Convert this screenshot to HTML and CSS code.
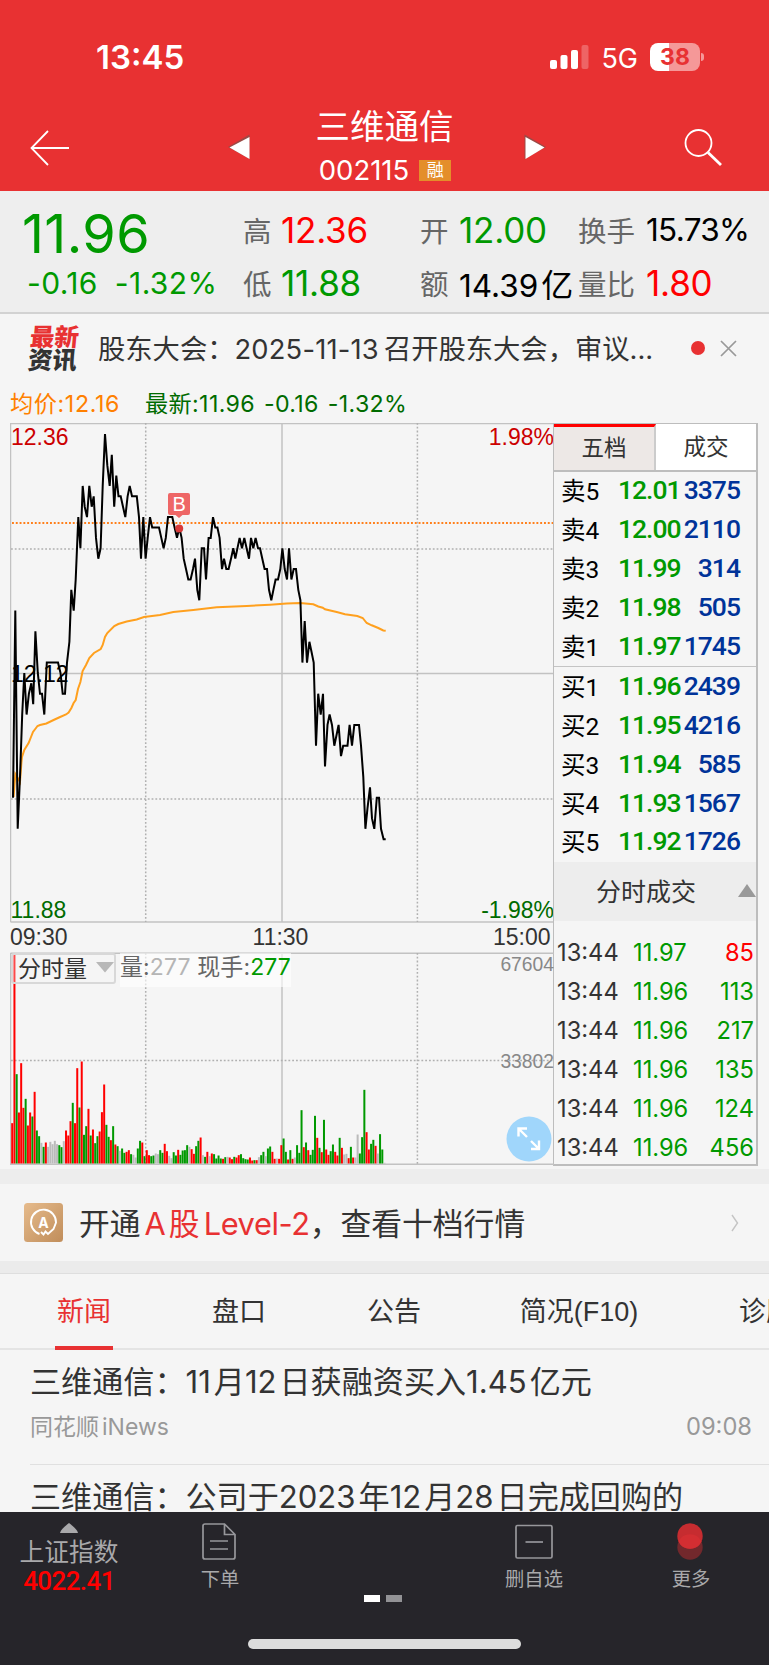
FILE: index.html
```html
<!DOCTYPE html>
<html lang="zh-CN">

<head>
    <meta charset="UTF-8">
    <meta name="viewport" content="width=device-width, initial-scale=1.0">
    <title>三维通信 002115</title>
    <link rel="stylesheet" href="styles.css">
</head>

<body>
    <header class="header">
        <div class="status">
            <span class="clock">13:45</span>
            <svg class="signal" width="39" height="26" viewBox="0 0 39 26" fill="#fff">
                <rect x="0" y="16" width="7" height="9" rx="2" />
                <rect x="10.5" y="11" width="7" height="14" rx="2" />
                <rect x="21" y="6" width="7" height="19" rx="2" />
                <rect x="31.5" y="1" width="7" height="24" rx="2" opacity="0.25" />
            </svg>
            <span class="network">5G</span>
            <span class="battery">38</span>
            <span class="battery-tip"></span>
        </div>
        <div class="navbar">
            <svg class="back" width="40" height="36" viewBox="0 0 40 36" fill="none" stroke="#fff" stroke-width="1.8">
                <path d="M18 1 L1.5 18 L18 35 M1.5 18 H39" />
            </svg>
            <svg class="prev" width="22" height="26" viewBox="0 0 22 26">
                <path d="M0 13 L21.5 0.5 V25 Z" fill="#9b4a46" />
                <path d="M1.5 13.5 L21.5 3 V25 Z" fill="#fff" />
            </svg>
            <div class="stock">
                <div class="stock-name">三维通信</div>
                <div class="stock-code">002115<span class="tag">融</span></div>
            </div>
            <svg class="next" width="22" height="26" viewBox="0 0 22 26">
                <path d="M22 13 L0.5 0.5 V25 Z" fill="#9b4a46" />
                <path d="M20.5 13.5 L1.5 3 V25 Z" fill="#fff" />
            </svg>
            <svg class="search" width="40" height="38" viewBox="0 0 40 38" fill="none" stroke="#fff">
                <circle cx="14.5" cy="14" r="13" stroke-width="1.8" />
                <path d="M24 23.5 L37 36" stroke-width="2.8" />
            </svg>
        </div>
    </header>

    <section class="quote">
        <div class="price-box">
            <div class="price">11.96</div>
            <div class="change"><span>-0.16</span><span>-1.32%</span></div>
        </div>
        <div class="quote-grid">
            <span class="label">高</span><span class="value red">12.36</span>
            <span class="label">开</span><span class="value green">12.00</span>
            <span class="label">换手</span><span class="value small">15.73%</span>
            <span class="label">低</span><span class="value green">11.88</span>
            <span class="label">额</span><span class="value small amount">14.39<span class="unit">亿</span></span>
            <span class="label">量比</span><span class="value red">1.80</span>
        </div>
    </section>

    <section class="notice">
        <div class="notice-logo"><span>最新</span><span>资讯</span></div>
        <p class="notice-text">股东大会：<span class="date">2025-11-13</span>召开股东大会，审议...</p>
        <span class="dot"></span>
        <svg class="close" width="17" height="17" viewBox="0 0 17 17" stroke="#999" stroke-width="1.7">
            <path d="M1 1 L16 16 M16 1 L1 16" />
        </svg>
    </section>

    <div class="summary"><span class="avg">均价:12.16</span><span class="last">最新:11.96 <i>-0.16</i> <i>-1.32%</i></span></div>

    <main class="board">
        <div class="charts">
            <svg class="price-chart" width="544" height="529" viewBox="10 423 544 529">
                <g class="grid">
                    <path d="M10.5 423.5 H554 M10.5 673.5 H554 M10.5 922 H554 M10.5 423 V922 M282 423 V922" />
                    <path class="dotted" d="M11 549 H553 M11 799 H553 M145.7 423 V922 M417.4 423 V922" />
                </g>
                <path class="dotted last-line" d="M12 523 H553" />
                <polyline class="avg-line" points="13.6,797 15.4,774 17.8,778 20,782 21.4,763 22,757 24.3,750 28.6,743 31,737 33,732 36,728 37.5,726 40,725 46.4,723.5 53.6,720 59,717.5 66,714.5 68.6,712.6 71.4,708 73.6,703 75.7,700 78,689 80.4,682 82.6,671 86,665 89.3,658 94,653 100.7,649 102.7,645 105,637 107.3,633 114.3,626 118.3,624 126.7,621.5 136.7,619.5 144,617 160,615 173.3,612 193.3,610 216.7,607.3 246.7,606 270,604.7 286.7,603.5 300,603 313.3,604.3 318.3,606.5 322.7,607.7 325,609.3 336.7,612 345,614.3 357.3,616 362.7,618 366.7,623 371.7,625.3 378.3,628 383.3,630.5 385.7,630.7" />
                <!-- y is counted in ticks of 0.01 down from 12.36 -->
                <g transform="translate(0 423.6) scale(1 10.39)">
                    <polyline class="price-line" points="13,36 15.3,18 17.7,39 20,34 22.2,28 24.3,24 26.6,28 28.9,26 31.3,25 33.2,27 35.4,20 37.8,24 40,26 42,26 44.3,28 46.8,23 58,23 60.5,24 62.7,26 65,26 67,23 69.4,21 71.3,16 73.7,18 75.7,15 78.3,9 80.4,12 82.7,6 84.7,8 87,9 89.3,6 91.7,8 93.7,7 96,11 98.3,13 100.6,12 102.7,6 105,1 107.3,4 109.7,6 111.8,3 114.2,8 116.3,5 118.5,7 120.7,7 123,8 125.3,9 127.6,7 129.7,6 132,7 136.8,7 139,9 141,13 143.3,9 145.6,13 147.7,11 150,9 152.2,10 159,10 161.3,11 163.6,12 165.8,11 168,9 172.3,9 174.6,10 177,11 179.3,10 181.6,11 183.7,13 186,14 188.3,15 190.6,15 193,14 195,13 197.3,16 199.3,17 201.7,12 204,12 206,15 208.6,11 210.7,11 213,9 215.3,10 217.4,10 219.6,11 222,14 224,13 226.3,14 228.6,14 231,13 233.3,12 235.3,13 239.6,11 242,12 244.3,11 246.6,12 249,13 251,11 253.3,12 255.6,11 258,12 260,12 262.3,13 264.6,14 267,14 269,16 271.3,17 273.4,16 275.6,15 278,15 280.3,14 282.4,12 284.7,14 287,15 289,12 291.4,15 293.7,14 296,14 298.3,16 300.4,17 302.4,23 304.7,19 307,23 309.4,21 311.6,22 313.7,23 316,31 318.2,26 320.7,28 323,26 325,33 327.5,29 329.6,28 332,29 334.3,31 336.5,30 338.6,29 341,32 343.2,31 347.5,31 349.6,29 352,31 354.3,29 359,29 361,31 363.3,34 365.4,39 367.5,37 370,35 372,38 374.3,39 376.8,36 379,36 381,39 383.6,40 385.7,40" />
                </g>
                <g class="buy">
                    <circle cx="179.2" cy="528.5" r="4" />
                    <path d="M170 493 h18 q2 0 2 2 v18 q0 2 -2 2 h-5.5 l-3.5 3 l-3.5 -3 h-5.5 q-2 0 -2 -2 v-18 q0 -2 2 -2 Z" />
                    <text x="179.2" y="511" text-anchor="middle">B</text>
                </g>
                <text x="11" y="445" class="up">12.36</text>
                <text x="554" y="445" class="up" text-anchor="end">1.98%</text>
                <text x="11" y="682" class="mid">12.12</text>
                <text x="10.5" y="918" class="down">11.88</text>
                <text x="554" y="918" class="down" text-anchor="end">-1.98%</text>
                <text x="10" y="945">09:30</text>
                <text x="280.5" y="945" text-anchor="middle">11:30</text>
                <text x="550.5" y="945" text-anchor="end">15:00</text>
            </svg>
            <div class="volume">
                <svg class="volume-chart" width="544" height="215" viewBox="10 952 544 215">
                    <g class="grid">
                        <path d="M10.5 953.3 H554 M10.5 1164.3 H554 M10.5 953 V1165 M282 953 V1165" />
                        <path class="dotted" d="M11 1060.5 H553 M145.7 953 V1165 M417.4 953 V1165" />
                    </g>
                    <text x="554" y="971" class="vol-label" text-anchor="end">67604</text>
                    <text x="554" y="1067.5" class="vol-label" text-anchor="end">33802</text>
                    <g id="volumeBars"></g>
                </svg>
                <div class="volume-bar">
                    <div class="select">分时量<svg width="18" height="11" viewBox="0 0 18 11"><path d="M0 0 H18 L9 10.5 Z" fill="#b8b8b8" /></svg></div>
                    <div class="volume-info">量:<span class="gray">277</span> 现手:<span class="green">277</span></div>
                </div>
                <svg class="expand" width="46" height="46" viewBox="0 0 46 46">
                    <circle cx="23" cy="23" r="22.5" fill="#a0d6fb" />
                    <path d="M12.5 20.5 V12.5 H21 M12.5 12.5 L21 21 M25 25 L33 33 M25 33 H33 V24.5" fill="none" stroke="#fff" stroke-width="2.4" />
                </svg>
            </div>
        </div>

        <aside class="book">
            <div class="book-tabs">
                <span class="book-tab active">五档</span>
                <span class="book-tab">成交</span>
            </div>
            <div class="levels">
                <div class="level"><span>卖5</span><b>12.01</b><em>3375</em></div>
                <div class="level"><span>卖4</span><b>12.00</b><em>2110</em></div>
                <div class="level"><span>卖3</span><b>11.99</b><em>314</em></div>
                <div class="level"><span>卖2</span><b>11.98</b><em>505</em></div>
                <div class="level"><span>卖1</span><b>11.97</b><em>1745</em></div>
            </div>
            <div class="levels buys">
                <div class="level"><span>买1</span><b>11.96</b><em>2439</em></div>
                <div class="level"><span>买2</span><b>11.95</b><em>4216</em></div>
                <div class="level"><span>买3</span><b>11.94</b><em>585</em></div>
                <div class="level"><span>买4</span><b>11.93</b><em>1567</em></div>
                <div class="level"><span>买5</span><b>11.92</b><em>1726</em></div>
            </div>
            <div class="ticks-title">分时成交<svg width="18" height="13" viewBox="0 0 18 13"><path d="M0 13 L9 0 L18 13 Z" fill="#999" /></svg></div>
            <div class="ticks">
                <div class="tick"><span>13:44</span><span class="green">11.97</span><span class="red">85</span></div>
                <div class="tick"><span>13:44</span><span class="green">11.96</span><span class="green">113</span></div>
                <div class="tick"><span>13:44</span><span class="green">11.96</span><span class="green">217</span></div>
                <div class="tick"><span>13:44</span><span class="green">11.96</span><span class="green">135</span></div>
                <div class="tick"><span>13:44</span><span class="green">11.96</span><span class="green">124</span></div>
                <div class="tick"><span>13:44</span><span class="green">11.96</span><span class="green">456</span></div>
            </div>
        </aside>
    </main>

    <section class="promo">
        <svg class="promo-icon" width="39" height="39" viewBox="0 0 39 39">
            <defs>
                <linearGradient id="gold" x1="0" y1="0" x2="1" y2="1">
                    <stop offset="0" stop-color="#e6bb8c" />
                    <stop offset="1" stop-color="#c08d5a" />
                </linearGradient>
            </defs>
            <rect width="39" height="39" rx="3.5" fill="url(#gold)" />
            <path d="M15.5 31 A12.5 12.5 0 1 1 32 19.5 L29.5 26 L24 31 L21.5 28.5 L19.5 31.5 L17 29" fill="none" stroke="#fff" stroke-width="1.9" />
            <text x="19.5" y="24.5" text-anchor="middle">A</text>
        </svg>
        <p class="promo-text">开通<span class="hl"><span class="a">A</span>股<span class="lv">Level-2</span></span>，查看十档行情</p>
        <svg class="chevron" width="8" height="18" viewBox="0 0 8 18" fill="none" stroke="#c4c4c4" stroke-width="1.4">
            <path d="M1 1 L6.5 9 L1 17" />
        </svg>
    </section>

    <nav class="tabs">
        <span class="tab active">新闻</span>
        <span class="tab">盘口</span>
        <span class="tab">公告</span>
        <span class="tab f10">简况(F10)</span>
        <span class="tab">诊股</span>
    </nav>

    <section class="news">
        <article class="item">
            <h3>三维通信：<span>11</span>月<span>12</span>日获融资买入<span>1.45</span>亿元</h3>
            <div class="meta"><span>同花顺<span class="src">iNews</span></span><time>09:08</time></div>
        </article>
        <article class="item">
            <h3>三维通信：公司于<span>2023</span>年<span>12</span>月<span>28</span>日完成回购的</h3>
        </article>
    </section>

    <footer class="bottom">
        <div class="actions">
            <div class="index">
                <svg width="18" height="10" viewBox="0 0 18 10"><path d="M9 0 Q18 7 18 10 H0 Q0 7 9 0 Z" fill="#a9a9ab" /></svg>
                <div class="index-name">上证指数</div>
                <div class="index-value">4022.41</div>
            </div>
            <div class="action order">
                <svg width="34" height="37" viewBox="0 0 34 37" fill="none" stroke="#97979b" stroke-width="1.7">
                    <path d="M1 3 Q1 1 3 1 H22.5 L33 11.5 V34 Q33 36 31 36 H3 Q1 36 1 34 Z M22.5 1 V11.5 H33 M8 18 H26 M8 26 H26" />
                </svg>
                <span>下单</span>
            </div>
            <div class="action remove">
                <svg width="38" height="37" viewBox="0 0 38 37" fill="none" stroke="#97979b" stroke-width="1.7">
                    <rect x="1" y="2.5" width="36" height="32.5" rx="1.5" />
                    <path d="M10.5 19 H28" />
                </svg>
                <span>删自选</span>
            </div>
            <div class="action more">
                <svg width="26" height="37" viewBox="0 0 26 37">
                    <circle cx="13" cy="24" r="12.7" fill="#72282c" />
                    <circle cx="13" cy="13" r="12.7" fill="#c62c30" />
                    <path d="M1.5 18.5 A12.7 12.7 0 0 1 24.5 18.5 A12.7 12.7 0 0 1 1.5 18.5 Z" fill="#d32e32" />
                </svg>
                <span>更多</span>
            </div>
        </div>
        <div class="pager"><span class="on"></span><span></span></div>
        <div class="home-bar"></div>
    </footer>

    <script src="script.js"></script>
</body>

</html>
```

FILE: styles.css
```css
* {
    box-sizing: border-box;
}

body {
    margin: 0;
    width: 769px;
    height: 1665px;
    overflow: hidden;
    background-color: #f5f5f5;
    color: #333;
    font-family: Inter, "Noto Sans CJK SC", sans-serif;
    display: flex;
    flex-direction: column;
}

p,
h3 {
    margin: 0;
    font-weight: normal;
    white-space: nowrap;
}

svg {
    display: block;
    flex: none;
}

.red {
    color: #ff0000;
}

.green {
    color: #009900;
}

.gray {
    color: #b5b5b5;
}

/* header */
.header {
    height: 191px;
    flex: none;
    background-color: #e83132;
    color: #fff;
}

.status {
    height: 102px;
    padding: 12px 65px 0 96px;
    display: flex;
    align-items: center;
}

.clock {
    font-size: 33px;
    font-weight: 600;
    margin-right: auto;
}

.network {
    font-size: 27px;
    margin: 2px 12px 0 12px;
    letter-spacing: 0;
}

.battery {
    width: 50px;
    height: 28px;
    border-radius: 8px;
    background: linear-gradient(90deg, #fff 19px, #f59898 19px);
    color: #e83132;
    font-size: 23px;
    font-weight: 700;
    line-height: 28px;
    text-align: center;
}

.battery-tip {
    width: 3px;
    height: 8px;
    margin-left: 1px;
    border-radius: 0 3px 3px 0;
    background-color: #f59898;
}

.navbar {
    height: 89px;
    padding: 0 45px 0 30px;
    display: flex;
    align-items: flex-start;
}

.back {
    margin-top: 28px;
}

.prev {
    margin: 32px 0 0 158px;
}

.stock {
    width: 274px;
    padding-right: 5px;
    text-align: center;
}

.stock-name {
    font-size: 34.5px;
    line-height: 50px;
}

.stock-code {
    display: flex;
    justify-content: center;
    align-items: center;
    padding-left: 1px;
    font-size: 27.5px;
    line-height: 36px;
    letter-spacing: 0;
}

.tag {
    width: 32px;
    height: 21px;
    margin-left: 10px;
    background-color: #e48e2a;
    font-size: 17px;
    line-height: 21px;
}

.next {
    margin-top: 32px;
}

.search {
    margin: 27px 0 0 auto;
}

/* quote */
.quote {
    height: 123px;
    flex: none;
    display: flex;
    background-color: #eee;
    border-bottom: 2px solid #d2d2d2;
}

.price-box {
    width: 243px;
    flex: none;
    padding: 12px 0 0 22px;
    color: #009900;
}

.price {
    font-size: 54px;
    line-height: 62px;
    letter-spacing: 0.4px;
}

.change {
    display: flex;
    gap: 17px;
    padding-left: 5px;
    font-size: 30px;
    line-height: 36px;
    letter-spacing: 0.4px;
    white-space: nowrap;
}

.quote-grid {
    display: grid;
    grid-template-columns: 38px 139px 39px 119px 68px 120px;
    grid-template-rows: 53px 53px;
    padding-top: 12px;
    align-items: center;
    white-space: nowrap;
}

.label {
    font-size: 28.5px;
    color: #666;
}

.value {
    font-size: 35px;
    letter-spacing: -0.2px;
}

.value.small {
    font-size: 31.5px;
    color: #000;
    letter-spacing: -0.7px;
}

.value.amount {
    letter-spacing: 0;
}

.unit {
    margin-left: 3px;
    font-size: 32px;
}

/* notice */
.notice {
    height: 70px;
    flex: none;
    display: flex;
    align-items: center;
    padding: 0 0 3px 29px;
}

.notice-logo {
    width: 69px;
    padding-top: 2px;
    display: flex;
    flex-direction: column;
    font-size: 24.5px;
    font-weight: 900;
    line-height: 23px;
    transform: skewX(-5deg);
}

.notice-logo span:first-child {
    color: #e83132;
}

.notice-text {
    width: 593px;
    padding-bottom: 1px;
    font-size: 27.3px;
}

.date {
    letter-spacing: 0.2px;
    margin-right: 5px;
}

.dot {
    width: 14px;
    height: 14px;
    margin-top: 1px;
    border-radius: 50%;
    background-color: #e83132;
}

.close {
    margin: 2px 0 0 15px;
}

.summary {
    height: 39px;
    flex: none;
    padding-left: 10px;
    font-size: 23.2px;
    line-height: 41px;
    letter-spacing: 0.35px;
    white-space: pre;
}

.summary i {
    font-style: normal;
    margin-left: 2px;
}

.avg {
    display: inline-block;
    width: 135px;
    letter-spacing: 0.6px;
    color: #ff8000;
}

.last {
    color: #006b00;
}

/* charts */
.board {
    height: 746px;
    flex: none;
    display: flex;
    padding-left: 10px;
}

.charts {
    width: 543px;
    flex: none;
}

.charts text {
    font-family: "Liberation Sans", Arial, sans-serif;
    font-size: 23px;
    fill: #333;
}

.grid path {
    fill: none;
    stroke: #c2c2c2;
    stroke-width: 1.5;
}

.grid .dotted {
    stroke: #b0b0b0;
    stroke-dasharray: 1.8 2;
}

.last-line {
    stroke: #ff7f1a;
    stroke-width: 1.9;
    stroke-dasharray: 1.9 1.9;
}

.avg-line {
    fill: none;
    stroke: #ffa01e;
    stroke-width: 2;
}

.price-line {
    fill: none;
    stroke: #000;
    stroke-width: 2;
    vector-effect: non-scaling-stroke;
}

.buy circle {
    fill: #d93a3a;
}

.buy path {
    fill: #ee6666;
}

.charts .buy text {
    fill: #fff;
    font-size: 20px;
}

.charts .up {
    fill: #cc0000;
}

.charts .down {
    fill: #006b00;
}

.charts .mid {
    fill: #000;
}

.volume {
    position: relative;
}

.charts .vol-label {
    font-size: 19.3px;
    fill: #888;
}

.volume-bar {
    position: absolute;
    top: 1px;
    left: 1px;
    display: flex;
}

.select {
    width: 105px;
    height: 31px;
    padding: 0 0 3px 5px;
    display: flex;
    align-items: center;
    justify-content: space-between;
    background-color: rgba(245, 245, 245, 0.3);
    border: 2px solid #d8d8d8;
    border-radius: 3px;
    font-size: 23px;
    white-space: nowrap;
}

.volume-info {
    width: 171px;
    height: 34px;
    margin-left: 4px;
    background-color: rgba(255, 255, 255, 0.6);
    color: #666;
    font-size: 23px;
    letter-spacing: 0.1px;
    line-height: 29px;
    white-space: nowrap;
}

.expand {
    position: absolute;
    right: 1px;
    top: 164px;
}

/* order book */
.book {
    width: 205px;
    height: 743px;
    border: 2px solid #bdbdbd;
    border-left-width: 1px;
    border-top-width: 1px;
}

.book-tabs {
    display: flex;
    height: 48px;
    border-bottom: 2px solid #bdbdbd;
}

.book-tab {
    flex: 1;
    background-color: #fff;
    font-size: 22.5px;
    line-height: 46px;
    text-align: center;
}

.book-tab.active {
    background-color: #ede8e6;
    border-top: 3px solid #ff0000;
    border-right: 2px solid #ccc;
    line-height: 41px;
}

.buys {
    border-top: 1px solid #c4c4c4;
}

.level {
    height: 38.9px;
    padding: 0 0 3px 7px;
    display: flex;
    align-items: center;
    font-family: Roboto, "Noto Sans CJK SC", sans-serif;
    font-size: 26.5px;
    color: #000;
}

.level span {
    width: 57px;
    font-size: 24.5px;
}

.level b {
    width: 64px;
    font-weight: 500;
    letter-spacing: -1px;
    color: #009900;
}

.level em {
    width: 58px;
    font-style: normal;
    font-weight: 500;
    letter-spacing: -1px;
    text-align: right;
    color: #003399;
}

.ticks-title {
    height: 59px;
    padding: 0 0 2px 42px;
    display: flex;
    align-items: center;
    justify-content: space-between;
    background-color: #ededed;
    font-size: 25px;
}

.ticks {
    padding-top: 12px;
}

.tick {
    height: 39.1px;
    padding: 0 2px 0 3px;
    display: flex;
    align-items: center;
    font-size: 23.7px;
}

.tick span {
    width: 76px;
}

.tick span:last-child {
    width: 45px;
    text-align: right;
}

/* level-2 promo */
.promo {
    height: 104px;
    flex: none;
    display: flex;
    align-items: center;
    padding: 0 30px 0 24px;
    border-top: 15px solid #ededed;
    border-bottom: 12px solid #ebebeb;
}

.promo-icon text {
    font-size: 14px;
    font-weight: 700;
    fill: #fff;
}

.promo-text {
    margin: 0 auto 0 16px;
    padding-bottom: 3px;
    font-size: 30.8px;
}

.hl {
    color: #e83132;
}

.a {
    margin: 0 3px 0 4px;
}

.lv {
    margin-left: 4px;
    letter-spacing: -0.4px;
}

.tabs {
    height: 77px;
    flex: none;
    display: flex;
    border-top: 1px solid #dedede;
    border-bottom: 2px solid #e4e4e4;
    font-size: 27px;
    line-height: 76px;
    white-space: nowrap;
}

.tab {
    width: 58px;
    flex: none;
    margin-left: 55px;
    margin-right: 42px;
    text-align: center;
}

.tab.active {
    height: 76px;
    color: #e83132;
    border-bottom: 4px solid #e83132;
}

.tab.f10 {
    width: 124px;
    margin-left: 52px;
    margin-right: 41px;
    font-family: "Liberation Sans", "Noto Sans CJK SC", sans-serif;
}

/* news */
.news {
    height: 162px;
    flex: none;
    overflow: hidden;
    padding-left: 30px;
}

.item {
    height: 115px;
    padding-top: 9px;
    border-bottom: 1px solid #e0e0e0;
}

.item h3 {
    font-size: 31.1px;
    line-height: 46px;
}

.item h3 span {
    letter-spacing: 0;
    margin-right: 3px;
}

.meta {
    display: flex;
    justify-content: space-between;
    padding-right: 17px;
    margin-top: 5px;
    font-size: 23px;
    line-height: 34px;
    color: #999;
}

.meta time {
    font-size: 23.7px;
}

.src {
    margin-left: 3px;
}

/* bottom bar */
.bottom {
    height: 153px;
    flex: none;
    background-color: #26252a;
    color: #a9a9ab;
}

.actions {
    height: 83px;
    display: flex;
}

.index {
    width: 138px;
    padding-top: 11px;
    display: flex;
    flex-direction: column;
    align-items: center;
}

.index-name {
    padding-top: 1px;
    font-size: 24.7px;
    line-height: 36px;
}

.index-value {
    color: #ff0000;
    font-family: Roboto, sans-serif;
    font-size: 26px;
    font-weight: 500;
    line-height: 22px;
    letter-spacing: -0.6px;
}

.action {
    width: 80px;
    padding-top: 11px;
    display: flex;
    flex-direction: column;
    align-items: center;
    font-size: 19.3px;
    line-height: 20px;
}

.action svg {
    margin-bottom: 9px;
}

.order {
    margin-left: 42px;
}

.order svg {
    margin-right: 2px;
}

.remove {
    margin-left: 234px;
}

.more {
    margin-left: 77px;
}

.more svg {
    margin-right: 3px;
}

.pager {
    height: 7px;
    display: flex;
    justify-content: center;
    gap: 6px;
    padding-right: 3px;
}

.pager span {
    width: 16px;
    background-color: #929295;
}

.pager .on {
    background-color: #fff;
}

.home-bar {
    width: 273px;
    height: 10px;
    margin: 37px auto 0;
    border-radius: 5px;
    background-color: #dcdcdc;
}
```

FILE: script.js
```js
// one bar per minute: r = up, g = down, s = flat, number = height in 1/3 px
const volumes = 'r121 r628 g268 r153 r301 r167 g194 r114 r153 g141 r215 g99 g82 s62 g50 r63 s50 s65 s58 s68 s58 g55 g49 s67 r99 r84 r127 g182 r121 r286 g168 r306 g86 g112 r164 g84 r102 g61 g82 r96 r154 r237 g116 g80 r70 g112 r57 g52 s38 g45 g32 r35 r40 g28 s26 s18 g45 g68 r63 g22 r40 r25 g22 g24 s30 s28 g40 g32 r59 r37 s23 s16 g34 g24 r41 g26 g39 g40 g55 s50 r43 r29 g52 g68 r78 s25 g20 r35 s22 r30 g28 g15 g24 g15 r14 g19 s20 r18 r13 g20 r18 r25 g28 g16 g13 g12 r18 r9 g10 r10 s19 g25 g35 s22 g45 g51 r35 r14 s15 r14 r55 g75 g35 r12 g40 r14 s18 g55 g32 g160 r49 g63 r40 g26 g41 g143 r77 g47 r34 g131 r42 r26 g37 g57 r35 r24 g77 r47 s27 s29 r16 g50 r18 s18 s87 g30 g79 g221 r94 r42 g59 g71 r53 s30 g88 g42 s2'.split(' ');

const colors = { r: '#ff0000', g: '#009900', s: '#bbbbbb' };
const bars = document.getElementById('volumeBars');

volumes.forEach(function (item, i) {
    const height = item.slice(1) / 3;
    const rect = document.createElementNS('http://www.w3.org/2000/svg', 'rect');
    rect.setAttribute('x', 11.2 + i * 2.243);
    rect.setAttribute('y', 1163.5 - height);
    rect.setAttribute('width', 2);
    rect.setAttribute('height', height);
    rect.setAttribute('fill', colors[item[0]]);
    bars.appendChild(rect);
});
```
